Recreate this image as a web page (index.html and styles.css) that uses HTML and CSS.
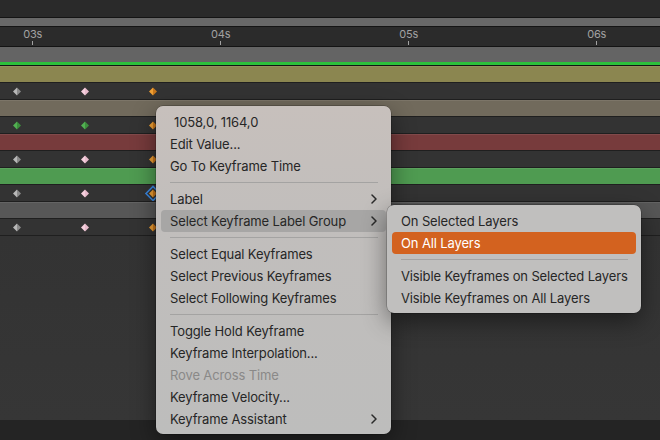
FILE: index.html
```html
<!DOCTYPE html>
<html lang="en">
<head>
    <meta charset="UTF-8">
    <meta name="viewport" content="width=device-width, initial-scale=1.0">
    <title>Keyframe Context Menu</title>
    <link rel="stylesheet" href="styles.css">
</head>
<body>
    <svg class="defs" width="0" height="0">
        <defs>
            <g id="key-gray"><path d="M-4 0L0-4V4Z" fill="#b8b8b8"/><path d="M0-4L4 0 0 4Z" fill="#8a8a8a"/></g>
            <g id="key-pink"><path d="M-4 0L0-4V4Z" fill="#f6d0de"/><path d="M0-4L4 0 0 4Z" fill="#e9bccd"/></g>
            <g id="key-orange"><path d="M-4 0L0-4V4Z" fill="#f0a034"/><path d="M0-4L4 0 0 4Z" fill="#c9781c"/></g>
            <g id="key-green"><path d="M-4 0L0-4V4Z" fill="#52b052"/><path d="M0-4L4 0 0 4Z" fill="#3d8e3d"/></g>
            <symbol id="chevron" viewBox="0 0 6 10"><path d="M1 1l4 4-4 4" fill="none" stroke="#2a2a2a" stroke-width="1.5" stroke-linecap="round" stroke-linejoin="round"/></symbol>
        </defs>
    </svg>

    <div class="timeline">
        <div class="top-bar"></div>
        <div class="scroll-bar"></div>
        <div class="ruler">
            <div class="mark"><span>03s</span><i></i></div>
            <div class="mark"><span>04s</span><i></i></div>
            <div class="mark"><span>05s</span><i></i></div>
            <div class="mark"><span>06s</span><i></i></div>
        </div>
        <div class="work-area"></div>
        <div class="time-line"></div>

        <div class="row band olive"></div>
        <div class="row keys">
            <svg width="660" height="16"><use href="#key-gray" x="17" y="8.5"/><use href="#key-pink" x="85" y="8.5"/><use href="#key-orange" x="153" y="8.5"/></svg>
        </div>
        <div class="row band taupe"></div>
        <div class="row keys">
            <svg width="660" height="16"><use href="#key-green" x="17" y="8.5"/><use href="#key-green" x="85" y="8.5"/><use href="#key-orange" x="153" y="8.5"/></svg>
        </div>
        <div class="row band red"></div>
        <div class="row keys">
            <svg width="660" height="16"><use href="#key-gray" x="17" y="8.5"/><use href="#key-pink" x="85" y="8.5"/><use href="#key-orange" x="153" y="8.5"/></svg>
        </div>
        <div class="row band green"></div>
        <div class="row keys">
            <svg width="660" height="16"><use href="#key-gray" x="17" y="8.5"/><use href="#key-pink" x="85" y="8.5"/><path d="M146 8.5L153 1.5 160 8.5 153 15.5Z" fill="none" stroke="#3a88e2" stroke-width="1.6"/><use href="#key-orange" x="153" y="8.5"/></svg>
        </div>
        <div class="row band gray"></div>
        <div class="row keys">
            <svg width="660" height="16"><use href="#key-gray" x="17" y="8.5"/><use href="#key-pink" x="85" y="8.5"/><use href="#key-orange" x="153" y="8.5"/></svg>
        </div>

        <div class="empty"></div>
        <div class="bottom-bar"></div>
    </div>

    <div class="menu main-menu">
        <div class="item value">1058,0, 1164,0</div>
        <div class="item">Edit Value...</div>
        <div class="item">Go To Keyframe Time</div>
        <div class="sep"></div>
        <div class="item">Label <svg class="chev"><use href="#chevron"/></svg></div>
        <div class="item hover">Select Keyframe Label Group <svg class="chev"><use href="#chevron"/></svg></div>
        <div class="sep"></div>
        <div class="item">Select Equal Keyframes</div>
        <div class="item">Select Previous Keyframes</div>
        <div class="item">Select Following Keyframes</div>
        <div class="sep"></div>
        <div class="item">Toggle Hold Keyframe</div>
        <div class="item">Keyframe Interpolation...</div>
        <div class="item disabled">Rove Across Time</div>
        <div class="item">Keyframe Velocity...</div>
        <div class="item">Keyframe Assistant <svg class="chev"><use href="#chevron"/></svg></div>
    </div>

    <div class="menu sub-menu">
        <div class="item">On Selected Layers</div>
        <div class="item active">On All Layers</div>
        <div class="sep"></div>
        <div class="item">Visible Keyframes on Selected Layers</div>
        <div class="item">Visible Keyframes on All Layers</div>
    </div>
</body>
</html>
```

FILE: styles.css
```css
body {
    margin: 0;
    width: 660px;
    height: 440px;
    overflow: hidden;
    background: #333333;
    font-family: Inter, "Noto Sans", sans-serif;
}
.defs {
    position: absolute;
}
.timeline {
    display: flex;
    flex-direction: column;
    height: 440px;
}
.top-bar {
    height: 17px;
    background: #2a2a2a;
    border-bottom: 1px solid #141414;
}
.scroll-bar {
    height: 8px;
    background: #686868;
    border-bottom: 1px solid #141414;
}
.ruler {
    height: 19px;
    background: #2b2b2b;
    border-bottom: 1px solid #141414;
    display: flex;
    gap: 148px;
    padding-left: 12.7px;
}
.mark {
    width: 40px;
    display: flex;
    flex-direction: column;
    align-items: center;
    padding-top: 1px;
}
.mark span {
    font-size: 11px;
    line-height: 12px;
    letter-spacing: -0.2px;
    color: #a2a2a2;
}
.mark i {
    width: 1px;
    height: 4px;
    margin-top: 1px;
    background: #a2a2a2;
}
.work-area {
    height: 15px;
    background: #646464;
}
.time-line {
    height: 3px;
    background: #2cc03b;
    border-bottom: 1px solid #141414;
}
.row {
    height: 16px;
    border-bottom: 1px solid #1f1f1f;
}
.row svg {
    display: block;
}
.keys {
    background: #333333;
}
.band {
    box-shadow: inset 0 1px 0 rgba(255, 255, 255, 0.08);
}
.olive {
    background: #8b8650;
}
.taupe {
    background: #716a5c;
}
.red {
    background: #773b3c;
}
.green {
    background: #4f9b51;
}
.gray {
    background: #575757;
}
.empty {
    flex: 1;
    background: linear-gradient(#333333, #363636);
}
.bottom-bar {
    height: 20px;
    background: #242424;
}

.menu {
    position: absolute;
    padding: 5px 0 4px;
    border-radius: 7px;
    font-size: 13px;
    letter-spacing: -0.13px;
    color: #262626;
    box-shadow: 0 0 0 0.5px rgba(0, 0, 0, 0.35), 0 8px 24px rgba(0, 0, 0, 0.45);
}
.main-menu {
    left: 156px;
    top: 106px;
    width: 235px;
    background: linear-gradient(#c7c0bc, #c1bebc 35%, #bdbdbc);
}
.sub-menu {
    left: 387px;
    top: 205px;
    width: 254px;
    background: #c0bfbe;
}
.item {
    height: 22px;
    margin: 0 5px;
    padding: 0 9px;
    display: flex;
    align-items: center;
    justify-content: space-between;
    border-radius: 4px;
    white-space: nowrap;
}
.item.value {
    padding-left: 13px;
}
.item.hover {
    background: #a7a6a5;
}
.item.active {
    background: #d3621f;
    color: #ffffff;
}
.item.disabled {
    color: #8a8988;
}
.chev {
    width: 6px;
    height: 10px;
}
.sep {
    height: 1px;
    margin: 5px 13px 5px 14px;
    background: #a4a3a2;
}
```
